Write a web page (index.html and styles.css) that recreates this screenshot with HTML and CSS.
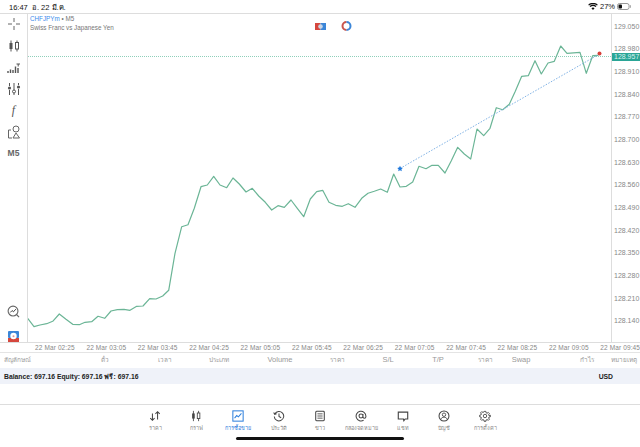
FILE: index.html
```html
<!DOCTYPE html>
<html lang="th">
<head>
<meta charset="utf-8">
<title>CHFJPYm</title>
<link rel="stylesheet" href="styles.css">
</head>
<body>
<div class="status">
  <span class="status-time">16:47&nbsp; อ. 22 มี.ค.</span>
  <span class="status-right">
    <svg class="wifi" width="10" height="7" viewBox="0 0 11 8"><path d="M5.500 8 3.700 5.900a2.700 2.700 0 0 1 3.600 0zM2.600 4.700 1.500 3.500a6 6 0 0 1 8 0L8.400 4.700a4.400 4.400 0 0 0-5.800 0zM.9 2.900 0 1.900a8.200 8.200 0 0 1 11 0l-.9 1a6.800 6.800 0 0 0-9.200 0z" fill="#111"/></svg>
    <span>27%</span>
    <svg class="battery" width="14" height="7" viewBox="0 0 14 7"><rect x=".5" y=".5" width="11.500" height="6" rx="2" fill="none" stroke="#999"/><rect x="1.500" y="1.500" width="3.500" height="4" rx="1" fill="#111"/><rect x="12.800" y="2.200" width="1" height="2.600" fill="#999"/></svg>
  </span>
</div>

<div class="chart-area">
  <aside class="tools">
    <div class="tools-top">
      <svg class="tool" width="14" height="14" viewBox="0 0 14 14"><path d="M7 1v4M7 9v4M1 7h4M9 7h4" stroke="#666" fill="none"/></svg>
      <svg class="tool" width="14" height="14" viewBox="0 0 14 14"><path d="M4 1.500v11M10 1.500v11" stroke="#555"/><rect x="2.500" y="4" width="3" height="6" fill="#555"/><rect x="8.500" y="3.500" width="3" height="6.500" fill="#fff" stroke="#555"/></svg>
      <svg class="tool" width="14" height="14" viewBox="0 0 14 14"><path d="M1 13v-2M3.500 13V9.500M6 13V10M8.500 13V6.500M11 13V8" stroke="#555" stroke-width="1.400"/><path d="M9.500 4h3.500M11.200 4v2.500" stroke="#555"/></svg>
      <svg class="tool" width="14" height="14" viewBox="0 0 14 14"><path d="M2.500 1v3M2.500 8v5M7 1v7M7 11v2M11.500 1v2M11.500 7v6" stroke="#555"/><circle cx="2.500" cy="6" r="1.600" fill="#555"/><circle cx="7" cy="9.500" r="1.500" fill="#fff" stroke="#555"/><circle cx="11.500" cy="5" r="1.600" fill="#555"/></svg>
      <span class="tool-f">f</span>
      <svg class="tool" width="14" height="14" viewBox="0 0 14 14"><circle cx="9" cy="4" r="3" fill="none" stroke="#666"/><path d="M6 13l3-5 3.500 5z" fill="none" stroke="#666"/><path d="M4 5H1.500v8H5" fill="none" stroke="#666"/></svg>
      <span class="tool-m5">M5</span>
    </div>
    <div class="tools-bottom">
      <svg class="tool" width="13" height="13" viewBox="0 0 14 14"><circle cx="6.500" cy="6.500" r="5.300" fill="none" stroke="#666" stroke-width="1.200"/><path d="M10.500 10.500 13 13" stroke="#666" stroke-width="1.200"/><path d="M3.500 8l2-2 1.500 1.300L9.500 4.500" fill="none" stroke="#333"/></svg>
      <svg class="tool" width="11" height="11" viewBox="0 0 11 11"><rect width="11" height="7" rx="1" fill="#3c86d8"/><path d="M0 7h11v4H0z" fill="#d5473d"/><circle cx="5.500" cy="5" r="3.200" fill="#fff"/><circle cx="5.500" cy="5.300" r="1" fill="#d99"/></svg>
    </div>
  </aside>

  <main class="plot">
    <svg class="plot-svg" width="583" height="328" viewBox="28 14 583 328">
      <line x1="28" y1="56.500" x2="611" y2="56.500" stroke="#8fcfba" stroke-dasharray="1 1"/>
      <polyline class="price" points="27.7,318.3 34,326.700 40,325 46.700,323.700 52.700,321.300 59.300,314 66,319.300 72.700,324.300 79.300,324.700 85,322.300 91.700,321.700 98,316.300 104.700,318.300 111,311 117.300,309.700 124,309.300 130,310.300 136.700,306.300 143,306 149.700,298.700 156,299 162.700,296 168.700,290.300 175,253.300 181.700,226.700 188,224.700 194.300,208.300 201,186.700 207.300,185 213.700,176.300 220,185 226.700,187.700 233,178 239.300,184 246,192 252.300,188.300 258.700,196 265.300,202.300 271.700,210 278,205.700 284.300,207.300 291,200 297.300,208.300 303.700,216.700 310.300,199 316.700,191.700 322.700,190.300 329,202.300 335.700,205.300 342.300,206.300 348.300,203.700 355,207.300 361.700,198.300 368,193.300 374.300,191.300 380.700,189 387.300,192.300 393.700,174 400,187 406.300,186.300 412.700,182 419,166.300 426,168.700 432,165.300 438.300,165.300 445,173 451.300,160.700 457.700,147.300 464.300,154 470.700,159 477,129 483.700,135.700 490,128.300 496.300,107.700 502.700,109.700 509.300,104.300 515.300,91.300 521.700,76.300 528.300,75.700 535,60.700 541.300,74 548,63 554.300,61.300 560.700,46 567,53.300 580,52.300 586.300,73.300 592.700,55.700 598.300,55.300"/>
      <line x1="400" y1="168.500" x2="599.500" y2="54" stroke="#7fb2e5" stroke-dasharray="1.500 1.500"/>
      <path d="M400 165.800l.9 1.800 1.900.3-1.400 1.300.4 2-1.800-1-1.800 1 .4-2-1.400-1.300 1.900-.3z" fill="#1f78dc"/>
      <circle cx="599.500" cy="53.500" r="2" fill="#d6403a"/>
    </svg>
    <div class="symbol">
      <div class="symbol-line"><span class="symbol-name">CHFJPYm</span> • M5</div>
      <div class="symbol-desc">Swiss Franc vs Japanese Yen</div>
    </div>
    <div class="chart-badges">
      <svg width="11" height="7" viewBox="0 0 11 7"><rect width="5.500" height="7" fill="#d5473d"/><rect x="5.500" width="5.500" height="7" fill="#3c86d8"/><circle cx="5.500" cy="3.500" r="2.300" fill="#c9d6e6"/></svg>
      <svg width="11" height="10" viewBox="0 0 11 10"><path d="M5.500 1a4 4 0 0 0 0 8" fill="none" stroke="#c9544d" stroke-width="2"/><path d="M5.500 1a4 4 0 0 1 0 8" fill="none" stroke="#3c86d8" stroke-width="2"/></svg>
    </div>
  </main>

  <div class="prices">
    <span>129.050</span><span>128.980</span><span>128.910</span><span>128.840</span><span>128.770</span><span>128.700</span><span>128.630</span><span>128.560</span><span>128.490</span><span>128.420</span><span>128.350</span><span>128.280</span><span>128.210</span><span>128.140</span>
    <div class="price-tag">128.957</div>
  </div>
</div>

<div class="times">
  <span>22 Mar 02:25</span><span>22 Mar 03:05</span><span>22 Mar 03:45</span><span>22 Mar 04:25</span><span>22 Mar 05:05</span><span>22 Mar 05:45</span><span>22 Mar 06:25</span><span>22 Mar 07:05</span><span>22 Mar 07:45</span><span>22 Mar 08:25</span><span>22 Mar 09:05</span><span>22 Mar 09:45</span>
</div>

<div class="table-head">
  <span><b class="th">สัญลักษณ์</b></span><span><b class="th">ตั๋ว</b></span><span><b class="th">เวลา</b></span><span><b class="th">ประเภท</b></span><span><b>Volume</b></span><span><b class="th">ราคา</b></span><span><b>S/L</b></span><span><b>T/P</b></span><span><b class="th">ราคา</b></span><span><b>Swap</b></span><span><b class="th">กำไร</b></span><span><b class="th">หมายเหตุ</b></span>
</div>

<div class="balance">
  <span>Balance: 697.16 Equity: 697.16 ฟรี: 697.16</span>
  <span class="currency">USD</span>
</div>

<nav class="nav">
  <div class="nav-items">
    <div class="nav-item">
      <svg width="12" height="12" viewBox="0 0 14 14"><path d="M4 4v8M1.500 9.500 4 12l2.500-2.500M10 11V2M7.500 4.500 10 2l2.500 2.500" fill="none" stroke="#444" stroke-width="1.200"/></svg>
      <span>ราคา</span>
    </div>
    <div class="nav-item">
      <svg width="12" height="12" viewBox="0 0 14 14"><path d="M4 1v12M10 1v12" stroke="#444"/><rect x="2.500" y="4" width="3" height="6" fill="#444"/><rect x="8.500" y="3.500" width="3" height="6.500" fill="#fff" stroke="#444"/></svg>
      <span>กราฟ</span>
    </div>
    <div class="nav-item active">
      <svg width="12" height="12" viewBox="0 0 14 14"><rect x="1" y="1" width="12" height="12" fill="none" stroke="#2f80dd" stroke-width="1.200"/><path d="M3 9.500 5.500 6.500 7.500 8 11 4" fill="none" stroke="#2f80dd" stroke-width="1.200"/></svg>
      <span>การซื้อขาย</span>
    </div>
    <div class="nav-item">
      <svg width="12" height="12" viewBox="0 0 14 14"><path d="M2.200 4.500A5.500 5.500 0 1 1 1.500 7.500M.8 3 2 5l2.200-.6M7 4v3.500l2.500 1.500" fill="none" stroke="#444" stroke-width="1.200"/></svg>
      <span>ประวัติ</span>
    </div>
    <div class="nav-item">
      <svg width="12" height="12" viewBox="0 0 14 14"><rect x="2" y="1.500" width="10" height="11" rx="1" fill="none" stroke="#444" stroke-width="1.200"/><path d="M4 4.500h6M4 7h6M4 9.500h6" stroke="#444"/></svg>
      <span>ข่าว</span>
    </div>
    <div class="nav-item">
      <svg width="12" height="12" viewBox="0 0 14 14"><path d="M9.300 7a2.300 2.300 0 1 1-4.600 0 2.300 2.300 0 0 1 4.600 0zM9.300 4.800V8a1.700 1.700 0 0 0 3.400 0V7A5.700 5.700 0 1 0 10 12" fill="none" stroke="#444" stroke-width="1.200"/></svg>
      <span>กล่องจดหมาย</span>
    </div>
    <div class="nav-item">
      <svg width="12" height="12" viewBox="0 0 14 14"><path d="M1.500 2.500h11v8H9.500l-1.500 2-.5-2h-6z" fill="none" stroke="#444" stroke-width="1.300"/></svg>
      <span>แชท</span>
    </div>
    <div class="nav-item">
      <svg width="12" height="12" viewBox="0 0 14 14"><circle cx="7" cy="7" r="5.800" fill="none" stroke="#444" stroke-width="1.200"/><circle cx="7" cy="5.500" r="2" fill="none" stroke="#444"/><path d="M3.200 11c.8-2 2.200-2.600 3.800-2.600s3 .6 3.800 2.600" fill="none" stroke="#444"/></svg>
      <span>บัญชี</span>
    </div>
    <div class="nav-item">
      <svg width="12" height="12" viewBox="0 0 14 14"><path d="M6 1h2l.4 1.800 1.300.6 1.600-1 1.400 1.400-1 1.600.6 1.300L14 6.100v1.800l-1.700.4-.6 1.300 1 1.600-1.400 1.400-1.600-1-1.300.6L8 14H6l-.4-1.800-1.300-.6-1.600 1-1.400-1.400 1-1.600-.6-1.300L0 7.900V6.100l1.700-.4.600-1.300-1-1.600 1.400-1.400 1.600 1 1.300-.6z" transform="translate(.7 .7) scale(.9)" fill="none" stroke="#444" stroke-width="1.200"/><circle cx="7" cy="7" r="2" fill="none" stroke="#444"/></svg>
      <span>การตั้งค่า</span>
    </div>
  </div>
  <div class="home-bar"></div>
</nav>
</body>
</html>
```

FILE: styles.css
```css
* { box-sizing: border-box; }

html, body {
  margin: 0;
  padding: 0;
}

body {
  width: 640px;
  height: 447px;
  overflow: hidden;
  display: flex;
  flex-direction: column;
  background: #fff;
  font-family: "Liberation Sans", "Noto Sans", "DejaVu Sans", sans-serif;
  color: #333;
}

.status {
  height: 13px;
  flex: none;
  display: flex;
  justify-content: space-between;
  align-items: center;
  padding: 0 9px 0 9px;
  font-size: 7.500px;
  color: #111;
}

.status-right {
  display: flex;
  align-items: center;
  gap: 2px;
}

.chart-area {
  height: 330px;
  flex: none;
  display: flex;
  border-top: 1px solid #ddd;
  border-bottom: 1px solid #ddd;
}

.tools {
  width: 27px;
  flex: none;
  display: flex;
  flex-direction: column;
  justify-content: space-between;
  align-items: center;
  padding: 3px 0 0;
}

.tools-top {
  display: flex;
  flex-direction: column;
  align-items: center;
  gap: 7.500px;
}

.tools-bottom {
  display: flex;
  flex-direction: column;
  align-items: center;
  gap: 13px;
}

.tool {
  display: block;
}

.tool-f {
  height: 14px;
  font-family: "Liberation Serif", serif;
  font-style: italic;
  font-size: 12px;
  line-height: 14px;
  color: #555;
}

.tool-m5 {
  height: 14px;
  font-size: 8.500px;
  font-weight: bold;
  line-height: 14px;
  color: #666;
}

.plot {
  position: relative;
  width: 584px;
  flex: none;
  border-left: 1px solid #ddd;
}

.plot-svg {
  display: block;
}

.price {
  fill: none;
  stroke: #6bb596;
  stroke-width: 1.200;
  stroke-linejoin: round;
}

.symbol {
  position: absolute;
  left: 2px;
  top: 1px;
  font-size: 6.300px;
  line-height: 8.500px;
  color: #777;
}

.symbol-name {
  color: #3b8beb;
}

.chart-badges {
  position: absolute;
  left: 287px;
  top: 7px;
  display: flex;
  align-items: center;
  gap: 15px;
}

.prices {
  position: relative;
  flex: 1;
  display: flex;
  flex-direction: column;
  border-left: 1px solid #ddd;
  padding: 1.500px 0 0 2px;
  font-size: 7px;
  color: #888;
}

.prices span {
  height: 22.690px;
  flex: none;
  line-height: 22.690px;
  white-space: nowrap;
}

.price-tag {
  position: absolute;
  left: 0;
  right: 0;
  top: 38.500px;
  height: 8px;
  padding-left: 2px;
  background: #2aa596;
  color: #d9f2ee;
  line-height: 8px;
  white-space: nowrap;
}

.times {
  height: 8px;
  flex: none;
  display: flex;
  padding-left: 35px;
  margin-top: 1px;
  font-size: 6.500px;
  letter-spacing: .12px;
  color: #888;
  line-height: 8px;
  overflow: hidden;
}

.times span {
  width: 51.400px;
  flex: none;
  white-space: nowrap;
}

.table-head {
  height: 16px;
  flex: none;
  display: grid;
  grid-template-columns: 17px 88px 60px 54px 61px 57px 51px 50px 47px 36px 66px 37px;
  align-items: start;
  border-top: 1px solid #e4e4e4;
  font-size: 7.500px;
  line-height: 13px;
  color: #999;
}

.table-head span {
  justify-self: end;
  width: 0;
  display: flex;
  justify-content: center;
}

.table-head b {
  font-weight: normal;
  white-space: nowrap;
}

.table-head b.th {
  font-size: 6.400px;
}

.balance {
  height: 16px;
  flex: none;
  display: flex;
  justify-content: space-between;
  align-items: center;
  padding: 0 27px 0 4px;
  background: #eff2f9;
  font-size: 6.800px;
  font-weight: bold;
  color: #222;
}

.currency {
  font-weight: bold;
}

.nav {
  margin-top: auto;
  height: 43px;
  flex: none;
  border-top: 1px solid #ddd;
  display: flex;
  flex-direction: column;
  align-items: center;
}

.nav-items {
  display: flex;
  margin-top: 5px;
}

.nav-item {
  width: 41.250px;
  display: flex;
  flex-direction: column;
  align-items: center;
  gap: 1px;
  font-size: 5.500px;
  line-height: 8px;
  color: #888;
  white-space: nowrap;
}

.nav-item svg {
  display: block;
  margin-bottom: 1px;
}

.nav-item.active {
  color: #2f80dd;
}

.home-bar {
  width: 168px;
  height: 3px;
  margin-top: 5px;
  border-radius: 2px;
  background: #111;
}
```
